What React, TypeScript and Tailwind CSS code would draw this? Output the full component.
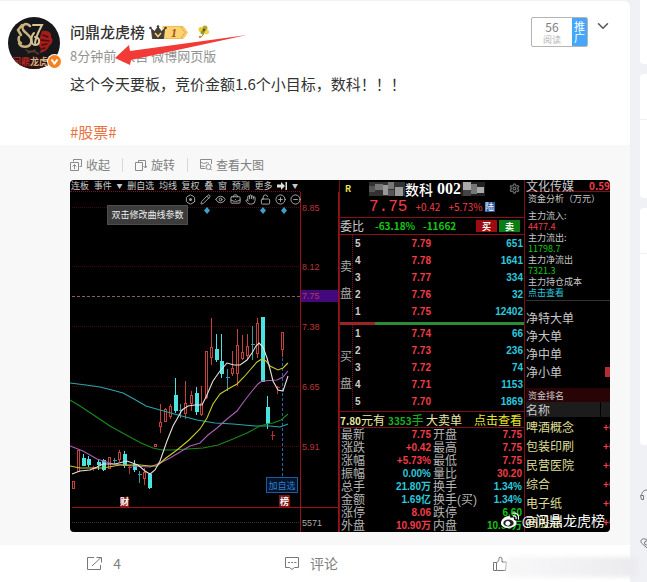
import { ReactNode } from 'react'
import { ChevronDown, CircleMinus, CirclePlus, Eye, Hand, Hexagon, LockOpen, Pencil, Settings, BriefcaseBusiness } from 'lucide-react'

interface Level {
  level: number;
  price: string;
  volume: string;
}

interface Candle {
  x: number;
  top: number;
  bottom: number;
  high: number;
  low: number;
  type: 'up' | 'down' | 'cross' | 'redCross';
}

const sellLevels: Level[] = [
  { level: 5, price: '7.79', volume: '651' },
  { level: 4, price: '7.78', volume: '1641' },
  { level: 3, price: '7.77', volume: '334' },
  { level: 2, price: '7.76', volume: '32' },
  { level: 1, price: '7.75', volume: '12402' },
]

const buyLevels: Level[] = [
  { level: 1, price: '7.74', volume: '66' },
  { level: 2, price: '7.73', volume: '236' },
  { level: 3, price: '7.72', volume: '74' },
  { level: 4, price: '7.71', volume: '1153' },
  { level: 5, price: '7.70', volume: '1869' },
]

const red = 'text-[#f23c46]'
const cyan = 'text-[#2cc8dc]'
const green = 'text-[#14c814]'

const stats = [
  ['最新', '7.75', red, '开盘', '7.75', red],
  ['涨跌', '+0.42', red, '最高', '7.75', red],
  ['涨幅', '+5.73%', red, '最低', '7.75', red],
  ['振幅', '0.00%', cyan, '量比', '30.20', red],
  ['总手', '21.80万', cyan, '换手', '1.34%', cyan],
  ['金额', '1.69亿', cyan, '换手(买)', '1.34%', cyan],
  ['涨停', '8.06', red, '跌停', '6.60', green],
  ['外盘', '10.90万', red, '内盘', '10.90万', green],
]

const funds = [
  { label: '主力流入:', value: '4477.4', color: red },
  { label: '主力流出:', value: '11798.7', color: green },
  { label: '主力净流出', value: '7321.3', color: green },
]

const orders = ['净特大单', '净大单', '净中单', '净小单']
const sectors = ['啤酒概念', '包装印刷', '民营医院', '综合', '电子纸', '高股息']

const candles: Candle[] = [
  { x: 73, top: 480, bottom: 487, high: 480, low: 487, type: 'up' },
  { x: 78, top: 449, bottom: 470, high: 449, low: 470, type: 'up' },
  { x: 83, top: 457, bottom: 465, high: 453, low: 465, type: 'down' },
  { x: 88, top: 458, bottom: 464, high: 455, low: 466, type: 'down' },
  { x: 93, top: 467, bottom: 467, high: 465, low: 470, type: 'redCross' },
  { x: 98, top: 461, bottom: 464, high: 458, low: 469, type: 'down' },
  { x: 103, top: 459, bottom: 469, high: 458, low: 470, type: 'down' },
  { x: 109, top: 456, bottom: 467, high: 456, low: 468, type: 'up' },
  { x: 114, top: 459, bottom: 459, high: 457, low: 463, type: 'cross' },
  { x: 119, top: 451, bottom: 458, high: 449, low: 461, type: 'up' },
  { x: 124, top: 453, bottom: 465, high: 450, low: 467, type: 'down' },
  { x: 129, top: 466, bottom: 466, high: 465, low: 473, type: 'redCross' },
  { x: 134, top: 463, bottom: 469, high: 459, low: 471, type: 'down' },
  { x: 139, top: 473, bottom: 473, high: 470, low: 482, type: 'cross' },
  { x: 144, top: 471, bottom: 477, high: 467, low: 484, type: 'up' },
  { x: 149, top: 473, bottom: 487, high: 472, low: 488, type: 'down' },
  { x: 155, top: 443, bottom: 445, high: 443, low: 445, type: 'up' },
  { x: 160, top: 421, bottom: 425, high: 403, low: 432, type: 'up' },
  { x: 165, top: 408, bottom: 420, high: 407, low: 420, type: 'up' },
  { x: 170, top: 405, bottom: 415, high: 403, low: 418, type: 'up' },
  { x: 175, top: 394, bottom: 410, high: 377, low: 412, type: 'down' },
  { x: 180, top: 409, bottom: 409, high: 403, low: 417, type: 'cross' },
  { x: 185, top: 402, bottom: 412, high: 380, low: 418, type: 'up' },
  { x: 191, top: 394, bottom: 402, high: 390, low: 410, type: 'up' },
  { x: 196, top: 392, bottom: 411, high: 386, low: 414, type: 'down' },
  { x: 201, top: 402, bottom: 413, high: 385, low: 415, type: 'up' },
  { x: 206, top: 350, bottom: 396, high: 350, low: 398, type: 'up' },
  { x: 211, top: 346, bottom: 356, high: 317, low: 364, type: 'up' },
  { x: 216, top: 348, bottom: 359, high: 333, low: 361, type: 'down' },
  { x: 221, top: 360, bottom: 373, high: 333, low: 377, type: 'down' },
  { x: 227, top: 376, bottom: 376, high: 368, low: 390, type: 'cross' },
  { x: 232, top: 367, bottom: 372, high: 350, low: 375, type: 'up' },
  { x: 237, top: 344, bottom: 372, high: 328, low: 385, type: 'up' },
  { x: 242, top: 351, bottom: 357, high: 334, low: 359, type: 'up' },
  { x: 247, top: 345, bottom: 354, high: 333, low: 359, type: 'up' },
  { x: 252, top: 343, bottom: 343, high: 325, low: 359, type: 'cross' },
  { x: 257, top: 322, bottom: 352, high: 317, low: 357, type: 'up' },
  { x: 262, top: 316, bottom: 381, high: 316, low: 381, type: 'down' },
  { x: 267, top: 406, bottom: 423, high: 395, low: 428, type: 'down' },
  { x: 272, top: 434, bottom: 434, high: 430, low: 439, type: 'redCross' },
  { x: 277, top: 386, bottom: 386, high: 385, low: 393, type: 'redCross' },
  { x: 282, top: 331, bottom: 348, high: 331, low: 356, type: 'up' },
]

const averages = [
  { color: '#2aa5ac', points: '70,382 86,384 100,386 112,389 123,392 134,398 146,405 160,409 178,414 197,419 215,422 233,423 255,425 270,425 280,426 288,423' },
  { color: '#158c1c', points: '70,399 80,405 92,413 110,425 128,435 141,442 153,447 162,449 172,449 188,448 203,447 218,444 233,438 247,432 260,425 267,423 273,422 281,419 288,413' },
  { color: '#a95fb4', points: '70,445 83,450 97,458 113,463 133,465 150,466 160,462 170,457 180,451 190,445 200,442 208,434 217,427 227,418 237,410 245,399 252,390 258,383 262,380 277,379 283,376 288,370' },
  { color: '#c9c92c', points: '70,465 80,467 92,467 103,467 120,464 140,464 150,465 157,465 166,457 177,449 189,439 200,428 207,417 213,403 220,393 228,388 237,383 244,376 250,369 257,361 262,358 266,360 270,365 278,369 283,367 288,362' },
  { color: '#e8dede', points: '72,473 80,470 90,469 97,466 103,463 115,463 127,460 138,464 145,470 150,473 155,469 160,460 167,440 173,425 177,418 182,409 188,405 195,404 202,404 206,396 213,380 220,370 227,362 234,364 240,364 247,359 252,352 256,345 259,342 263,346 267,357 270,368 273,380 278,389 283,390 288,375' },
]

const axis = [
  { y: 207, label: '8.85' },
  { y: 266, label: '8.12' },
  { y: 326, label: '7.38' },
  { y: 386, label: '6.65' },
  { y: 446, label: '5.91' },
]

function CandleShape({ candle }: { candle: Candle }) {
  const { x, top, bottom, high, low, type } = candle
  const mid = x + 0.5
  if (type === 'up') {
    return (
      <g stroke="#c6403c" fill="none">
        <path d={`M${mid} ${high}V${top}M${mid} ${bottom}V${low}`} />
        <rect x={x - 0.5} y={top + 0.5} width="2" height={bottom - top} />
      </g>
    )
  }
  if (type === 'down') {
    return (
      <g fill="#4be3e0">
        <rect x={x} y={high} width="1" height={low - high} />
        <rect x={x - 1} y={top} width="4" height={bottom - top} />
      </g>
    )
  }
  return <path d={`M${mid} ${high}V${low}M${x - 1} ${top + 0.5}h4`} stroke={type === 'cross' ? '#3a9aa0' : '#b93030'} />
}

function Chart() {
  return (
    <svg className="block" width="269" height="340" viewBox="70 191 269 340" fontFamily="Liberation Sans, sans-serif" fontSize="9">
      {axis.map((line) => (
        <g key={line.label}>
          <path d={`M72 ${line.y - 0.5}H300`} stroke="#480808" strokeDasharray="1 1" />
          <text x="302" y={line.y + 3} fill="#bc3434">{line.label}</text>
        </g>
      ))}
      <path d="M72 295.5H300" stroke="#8c5c58" strokeDasharray="3 2" />
      <path d="M72 521.5H300" stroke="#333" strokeDasharray="1 1" />
      <path d="M282.5 357V476" stroke="#2f62a8" strokeDasharray="3 2" />
      {candles.map((candle) => (
        <CandleShape key={candle.x} candle={candle} />
      ))}
      {averages.map((line) => (
        <polyline key={line.color} points={line.points} fill="none" stroke={line.color} strokeWidth="1.1" />
      ))}
      {[207, 263, 284].map((x) => (
        <path key={x} d={`M${x} 206l3 3.500l-3 3.500l-3 -3.500z`} fill="#3d9fc9" />
      ))}
      <path d="M300.500 191V531M338.500 191V531M72 506.500H338" stroke="#9c1018" />
      <rect x="301" y="289" width="37" height="12" fill="#43087c" />
      <text x="302" y="298" fill="#b43a58">7.75</text>
      <text x="302" y="525" fill="#aaa">5571</text>
      <rect x="120" y="496" width="9" height="10" fill="#8c1414" />
      <rect x="279" y="494" width="11" height="12" fill="#7c1414" />
      <g fill="#fff" fontFamily="Noto Sans CJK SC, sans-serif" fontSize="9" fontWeight="700">
        <text x="120" y="504">财</text>
        <text x="280" y="504">榜</text>
      </g>
    </svg>
  )
}

function ChartPanel() {
  return (
    <div className="w-[269px] shrink-0 relative">
      <div className="h-3 w-[230px] flex items-center justify-between pl-px pr-0.5 text-[9px] leading-none text-[#c8c8c8] border-b border-dotted border-[#7c1018] whitespace-nowrap">
        <button>连板</button>
        <button>事件</button>
        <span className="text-[6px]">▼</span>
        <button>删自选</button>
        <button>均线</button>
        <button>复权</button>
        <button>叠</button>
        <button>窗</button>
        <button>预测</button>
        <button>更多</button>
        <svg width="10" height="8" viewBox="0 0 10 8" fill="#ddd"><path d="M0 2.500h4V0l4 4l-4 4V5.500H0zM8.500 0H10V8H8.500z" /></svg>
        <span className="text-[6px]">▼</span>
      </div>
      <Chart />
      <div className="absolute top-3.5 left-[115px] flex gap-1 text-[#b0b0b0]">
        <span className="relative">
          <Hexagon size={11} />
          <span className="absolute left-1 top-1 w-[3px] h-[3px] rounded-full bg-[#999]" />
        </span>
        <Pencil size={11} />
        <Eye size={11} />
        <BriefcaseBusiness size={11} />
        <Hand size={11} />
        <LockOpen size={11} />
        <CirclePlus size={11} />
        <CircleMinus size={11} />
      </div>
      <div role="tooltip" className="absolute left-[37px] top-[25px] w-[81px] h-5 bg-[#3c3c3c] border border-[#4c4c4c] text-[9px] leading-[18px] text-center text-[#eee] whitespace-nowrap">
        双击修改曲线参数
      </div>
      <button className="absolute left-[196px] top-[297px] w-8 h-4 border border-[#1c5c9c] bg-[#04142c] text-[9px] leading-none text-[#2c80cc]">
        加自选
      </button>
    </div>
  )
}

function OrderBook({ side, levels }: { side: string; levels: Level[] }) {
  return (
    <div className="flex">
      <div className="w-[13px] border-r border-dotted border-[#8c1018] flex flex-col items-center justify-center gap-[15px] pt-1 text-[12px] leading-none text-[#aaa]">
        <span>{side}</span>
        <span>盘</span>
      </div>
      <table className="flex-1 text-[10px] leading-none font-bold">
        <tbody className="block">
          {levels.map((item) => (
            <tr key={item.level} className="h-[17px] flex items-center">
              <td className="w-10 pl-0.5 text-[#ccc]">{item.level}</td>
              <td className={`w-[38px] text-right ${red}`}>{item.price}</td>
              <td className={`flex-1 pr-px text-right ${cyan}`}>{item.volume}</td>
            </tr>
          ))}
        </tbody>
      </table>
    </div>
  )
}

function QuotePanel() {
  return (
    <div className="w-[186px] shrink-0 flex flex-col border-l border-r border-[#7c1018] whitespace-nowrap">
      <div className="h-[38px] border-b border-[#8c1018]">
        <div className="h-[17px] flex items-center pl-[5px] pr-1">
          <span className="w-6 text-[9px] leading-none font-bold text-[#e6e65a]">R</span>
          <svg width="36" height="14" viewBox="0 0 36 14">
            <rect width="36" height="14" fill="#333" />
            <path d="M6 2h8v6H6zM19 0h6v7h-6z" fill="#777" />
            <path d="M14 3h5v10h-5zM26 5h8v9h-8z" fill="#999" />
            <path d="M0 4h6v6H0zM19 8h6v6h-6z" fill="#555" />
          </svg>
          <span className="text-[14px] leading-none font-medium text-white">数科</span>
          <span className="pl-1 font-['Liberation_Serif'] text-[16px] leading-none font-bold text-white">002</span>
          <svg width="24" height="14" viewBox="0 0 24 14">
            <rect width="24" height="14" fill="#222" />
            <path d="M2 0h8v8H2zM16 5h7v6h-7z" fill="#aaa" />
            <path d="M10 2h6v10h-6z" fill="#777" />
            <path d="M2 8h8v6H2z" fill="#444" />
          </svg>
          <Settings size={11} strokeWidth={3} className="ml-auto text-[#666]" />
        </div>
        <div className={`h-5 flex items-center pl-[29px] ${red}`}>
          <span className="font-['Liberation_Mono'] text-[16px] leading-none">7.75</span>
          <span className="pl-2 text-[10px] leading-none">+0.42</span>
          <span className="pl-2 text-[10px] leading-none">+5.73%</span>
          <span className="ml-0.5 w-2.5 h-2.5 bg-[#2858a8] text-[9px] leading-[10px] text-center text-white">陆</span>
        </div>
      </div>
      <div className="h-[17px] flex items-center border-b border-[#8c1018] text-[10px] leading-none font-bold text-[#14c814]">
        <span className="w-[35px] text-[12px] font-normal text-[#ccc]">委比</span>
        <span className="w-12">-63.18%</span>
        <span>-11662</span>
        <button className="ml-auto w-[21px] h-3 bg-[#9c0c10] text-[9px] leading-none text-white">买</button>
        <button className="ml-0.5 mr-1 w-[21px] h-3 bg-[#0c7c14] text-[9px] leading-none text-white">卖</button>
      </div>
      <div className="h-[87px] flex flex-col">
        <OrderBook side="卖" levels={sellLevels} />
      </div>
      <div className="h-[3px] flex">
        <div className="w-[35px] bg-[#9c2424]" />
        <div className="flex-1 bg-[#2c8c34]" />
      </div>
      <div className="h-[86px] flex flex-col">
        <OrderBook side="买" levels={buyLevels} />
      </div>
      <div className="h-[17px] flex items-center border-y border-[#7c1018] text-[12px] leading-none text-[#e8e8a0]">
        <span className="w-12"><b className="text-[10px]">7.80</b>元有</span>
        <span className="w-[38px] text-[#14b41e]"><b className="text-[10px]">3353</b>手</span>
        <span>大卖单</span>
        <button className="ml-auto pr-0.5 text-[#e6e62c]">点击查看</button>
      </div>
      <table className="block text-[12px] leading-none text-[#b4b4b4]">
        <tbody className="block">
          {stats.map((row) => (
            <tr key={row[0]} className="h-[13px] flex items-center">
              <td className="w-10 pl-px">{row[0]}</td>
              <td className={`w-[51px] text-right text-[10px] font-bold ${row[2]}`}>{row[1]}</td>
              <td className="pl-0.5">{row[3]}</td>
              <td className={`flex-1 pr-0.5 text-right text-[10px] font-bold ${row[5]}`}>{row[4]}</td>
            </tr>
          ))}
        </tbody>
      </table>
    </div>
  )
}

function SectorPanel() {
  return (
    <div className="flex-1 min-w-0 pl-px overflow-hidden whitespace-nowrap text-[12px] leading-none text-[#c8c8c8]">
      <div className="h-3 flex items-center justify-between border-b border-[#7c1018]">
        <span>文化传媒</span>
        <span className={`text-[10px] font-bold ${red}`}>0.59</span>
      </div>
      <div className="h-[109px] pl-0.5 pt-px text-[9px] leading-[11px] border-b border-[#333]">
        <p className="pb-1.5">资金分析（万元）</p>
        {funds.map((item) => (
          <div key={item.label}>
            <p>{item.label}</p>
            <p className={item.color}>{item.value}</p>
          </div>
        ))}
        <p>主力持仓成本</p>
        <button className="block text-[#2cc8dc]">点击查看</button>
      </div>
      <div className="pt-2 h-[87px]">
        {orders.map((name) => (
          <div key={name} className="h-[18px] flex items-center justify-between">
            {name}
            {name === '净小单' && <span className="w-[5px] h-2.5 bg-[#b42c30]" />}
          </div>
        ))}
      </div>
      <div className="h-3.5 pl-0.5 flex items-center bg-[#280407] text-[9px]">资金排名</div>
      <div className="h-[15px] flex items-center bg-[#1c1c1c]">
        <span className="flex-1">名称</span>
        <span className="w-2.5 h-full border-l border-black" />
      </div>
      <ul className="text-[#dede96]">
        {sectors.map((name) => (
          <li key={name} className="h-[19px] flex items-center">
            <span className="w-[77px] shrink-0">{name}</span>
            <span className={`text-[10px] font-bold ${red}`}>+0</span>
          </li>
        ))}
      </ul>
    </div>
  )
}

function WeiboMark() {
  return (
    <svg width="21" height="18" viewBox="0 0 21 18" fill="none">
      <path d="M9 5C5 5 1 8.500 1 12c0 3 3.500 5 7.500 5c4.500 0 8-2.500 8-5.200c0-1.600-1.200-2.600-2.500-3c.6-2-.8-2.800-3.500-1.800C10.600 6 10.200 5 9 5z" fill="#fff" />
      <ellipse cx="8.500" cy="12" rx="5.200" ry="3.600" fill="#222" />
      <circle cx="7.800" cy="12.300" r="2.400" fill="#fff" />
      <path d="M13 2.200c3.500-.8 6.500 2 5.500 5.800M13.500 5c1.800-.3 3 .8 2.600 2.600" stroke="#fff" strokeWidth="1.300" strokeLinecap="round" />
    </svg>
  )
}

function Avatar() {
  return (
    <div className="relative w-[52px] h-[52px] shrink-0">
      <svg width="52" height="52" viewBox="0 0 52 52" role="img" aria-label="问鼎龙虎榜">
        <defs>
          <clipPath id="avatar"><circle cx="26" cy="26" r="26" /></clipPath>
        </defs>
        <g clipPath="url(#avatar)" fill="none" strokeLinecap="round">
          <rect width="52" height="52" fill="#15171a" />
          <path d="M0 40h52v12H0z" fill="#35100f" />
          <path d="M34 14c6-1 10 2 9 6c3 3 1 7-2 9c-1 4-6 7-10 7c3-3 2-5 0-7c-2-4 1-6 1-9z" fill="#a31d1b" />
          <path d="M35 18l5 2M33 23l8 1M34 28l5-1M34 32l3-1" stroke="#4c0c0c" strokeWidth="1.500" />
          <path d="M22 9c-5-5-10 1-6 5c4 4 9 7 7 12c-2 5-10 5-12 0M14 8l-4 5l3 5M11 20c-1 3 0 5 2 6" stroke="#c9b07c" strokeWidth="2.500" />
          <path d="M25 8h9c-3 6-6 11-7 18M26 16c-4 4-3 12 1 12c5 0 6-7 0-8" stroke="#d8c596" strokeWidth="2" />
          <path d="M18 33c3 2 6 2 9 0M20 36c3-2 8-2 10 1" stroke="#68402c" strokeWidth="1.500" />
          <text x="4" y="48" fontSize="9" fontWeight="700" fill="#a82824">问鼎</text>
          <text x="22" y="48" fontSize="9" fontWeight="700" fill="#d2b48a">龙虎</text>
        </g>
      </svg>
      <svg className="absolute -right-0.5 bottom-0" width="15" height="15" viewBox="0 0 15 15">
        <circle cx="7.500" cy="7.500" r="7.500" fill="#fff" />
        <circle cx="7.500" cy="7.500" r="6.500" fill="#f5811f" />
        <path d="M4.500 5.500l3 4l3-4" stroke="#fff" strokeWidth="2" fill="none" />
      </svg>
    </div>
  )
}

function VipBadge() {
  return (
    <svg width="40" height="15" viewBox="0 0 40 15">
      <path d="M13 1.500h21l4.500 6l-4.500 6H13z" fill="#fbd372" />
      <path d="M32 2l4 5.500l-4 5.500" stroke="#e8a53c" fill="none" />
      <path d="M14 1.500h20l4.500 6l-4.500 6H14" stroke="#f0bc54" fill="none" />
      <path d="M2.500 4l3 2.500L9 2l3.500 4.500L15.500 4L14.500 13.500h-11z" fill="#443c3a" stroke="#443c3a" />
      <circle cx="1.500" cy="3" r="1.300" fill="#443c3a" />
      <circle cx="9" cy="1.500" r="1.300" fill="#443c3a" />
      <circle cx="16.500" cy="3" r="1.300" fill="#443c3a" />
      <path d="M6 8l3 3.500L12 8" stroke="#fbd372" strokeWidth="1.500" fill="none" />
      <text x="22" y="12" fontFamily="Liberation Serif, serif" fontSize="12" fontStyle="italic" fontWeight="700" fill="#a8521c">1</text>
    </svg>
  )
}

function FlowerIcon() {
  return (
    <svg width="13" height="14" viewBox="0 0 13 14">
      <path d="M6 7c1 2 0 4-2 5" stroke="#6c9c34" fill="none" />
      <circle cx="4" cy="4.500" r="2.500" fill="#f4c92c" />
      <circle cx="8" cy="3" r="2.500" fill="#b8a42c" />
      <circle cx="9.500" cy="7" r="2.500" fill="#f4d24c" />
      <circle cx="5.500" cy="7.500" r="2" fill="#90a030" />
      <circle cx="7" cy="5" r="1.500" fill="#54581c" />
      <circle cx="3" cy="12" r="1.200" fill="#f07840" />
    </svg>
  )
}

function MediaAction({ icon, children }: { icon: ReactNode; children: ReactNode }) {
  return (
    <button className="flex items-center gap-1 text-[12px] leading-4 text-[#808080]">
      {icon}
      {children}
    </button>
  )
}

function PostHeader() {
  return (
    <header className="flex pl-2 pr-[18px] pt-4">
      <Avatar />
      <div className="pl-2.5 pt-1 pb-0.5 flex-1 relative">
        <div className="flex items-center h-[22px]">
          <a href="#" className="text-[15px] font-medium text-[#333]">问鼎龙虎榜</a>
          <span className="pl-1"><VipBadge /></span>
          <span className="pl-2"><FlowerIcon /></span>
        </div>
        <div className="flex h-[26px] items-center gap-1.5 text-[13px] text-[#939393]">
          <a href="#">8分钟前</a>
          <span>来自 微博网页版</span>
        </div>
        <svg className="absolute left-[54px] top-[17px]" width="134" height="32" viewBox="0 0 134 32">
          <path d="M1 24L15 11L16 17L133 1L17 26L16 31z" fill="#f23a36" />
        </svg>
      </div>
      <div className="flex w-[57px] h-[30px] border border-[#b4b4b4] rounded-xs text-center overflow-hidden">
        <div className="flex-1 text-[#808080]">
          <p className="pt-0.5 text-[12px] leading-[14px]">56</p>
          <p className="text-[9px] leading-[11px] text-[#b4b4b4]">阅读</p>
        </div>
        <button className="w-[15px] bg-[#45a6fa] text-[11px] leading-[11px] text-white">推广</button>
      </div>
      <button aria-label="更多" className="ml-1.5 self-start text-[#555]"><ChevronDown size={18} /></button>
    </header>
  )
}

const outline = { fill: 'none', stroke: '#8a8a8a', strokeWidth: 1 }

function Post() {
  return (
    <article className="flex-1 min-w-0 mt-px bg-white rounded-tr-md">
      <PostHeader />
      <div className="pl-[70px] pr-5 pt-px pb-px text-[15px] leading-6 text-[#333]">
        <p>这个今天要板，竞价金额1.6个小目标，数科！！！</p>
        <p className="pt-6"><a href="#" className="text-[#eb7340]">#股票#</a></p>
      </div>
      <div className="bg-[#f8f8f8] pl-[70px] pr-5 pb-[13px]">
        <div className="h-[35px] pt-1 flex items-center gap-3">
          <MediaAction icon={<svg width="12" height="12" viewBox="0 0 12 12" {...outline}><path d="M3.500 2.500V.5h8v7h-2M.5 3.500h8v8h-8zM4.500 10V5.500M2.500 7.500l2-2l2 2" /></svg>}>收起</MediaAction>
          <span className="w-px h-3.5 bg-[#d8d8d8]" />
          <MediaAction icon={<svg width="12" height="12" viewBox="0 0 12 12" {...outline}><path d="M.5 3.500h7v8h-7zM3.500 3V1.500h7v7M8.500 7l2 2l1.500-2" /></svg>}>旋转</MediaAction>
          <span className="w-px h-3.5 bg-[#d8d8d8]" />
          <MediaAction icon={<svg width="12" height="12" viewBox="0 0 12 12" {...outline}><path d="M11.500 5V.5H.5v9h5M.5 3l3 1.500l4-1l1.500 1M.5 7l4 .5" /><circle cx="8.500" cy="8" r="2.500" /><path d="M10.500 10l1.500 1.500" /></svg>}>查看大图</MediaAction>
        </div>
        <div className="relative flex h-[352px] max-w-[540px] bg-black rounded overflow-hidden">
          <ChartPanel />
          <QuotePanel />
          <SectorPanel />
          <div className="absolute right-[5px] bottom-0.5 flex items-center gap-px text-[14px] leading-5 text-white">
            <WeiboMark />
            @问鼎龙虎榜
          </div>
        </div>
      </div>
      <footer className="relative h-[37px] pr-2 grid grid-cols-3 text-[14px] text-[#808080]">
        <button className="flex items-center justify-center gap-2.5">
          <svg width="17" height="15" viewBox="0 0 17 15" fill="none" stroke="#777"><path d="M8 1.500H1.500v12h13V9M6 10l9-8.500M10.500 1.500h5v5" /></svg>
          4
        </button>
        <button className="flex items-center justify-center gap-2.5">
          <svg width="16" height="15" viewBox="0 0 16 15" fill="none" stroke="#777"><path d="M1.500 1.500h13v10h-4L8 13.500l-2.500-2h-4zM4 6.500h2M7.200 6.500h2M10.400 6.500h2" /></svg>
          评论
        </button>
        <button aria-label="赞" className="flex items-center justify-center pr-9">
          <svg width="16" height="16" viewBox="0 0 16 16" fill="none" stroke="#777"><path d="M1.500 6.500h3v8h-3zM4.500 6.500C6.500 6 7 4 7 2c1-1.500 3-1 3 1v3h4.500l-1 8.500h-9" /></svg>
        </button>
        <div className="absolute left-[506px] -right-2 top-3 h-5 rounded bg-linear-to-r from-[#f8f8f9] to-[#ebebee] blur-[2px]" />
      </footer>
    </article>
  )
}

function Sidebar() {
  return (
    <aside className="w-[7px] shrink-0 flex flex-col gap-2.5">
      <div className="h-16 bg-white rounded-bl" />
      <div className="h-[124px] bg-white rounded-l">
        <div className="h-[46px] border-b border-[#f0f0f3]" />
      </div>
      <div className="h-[237px] bg-white rounded-l">
        <div className="h-[46px] border-b border-[#f0f0f3]" />
      </div>
      <div className="pt-[34px] flex flex-col gap-9 overflow-hidden">
        <svg width="14" height="12" viewBox="0 0 14 12" fill="none" stroke="#777"><path d="M1.500 7C1.500 3 4 1 7 1s5.500 2 5.500 6M.5 6.500h3v4h-2zM8 11h3" /></svg>
        <svg width="14" height="12" viewBox="0 0 14 12" fill="none" stroke="#777"><path d="M7 11L1.500 6C-.5 3 3 0 7 3c4-3 7.500 0 5.500 3z" /><circle cx="6.500" cy="6" r="2" /></svg>
      </div>
    </aside>
  )
}

export default function App() {
  return (
    <div className="min-h-screen flex gap-2.5 overflow-hidden bg-[#f0f1f5] font-['Noto_Sans_CJK_SC',sans-serif] [&_table]:font-['Liberation_Sans','Noto_Sans_CJK_SC',sans-serif]">
      <Post />
      <Sidebar />
    </div>
  )
}
